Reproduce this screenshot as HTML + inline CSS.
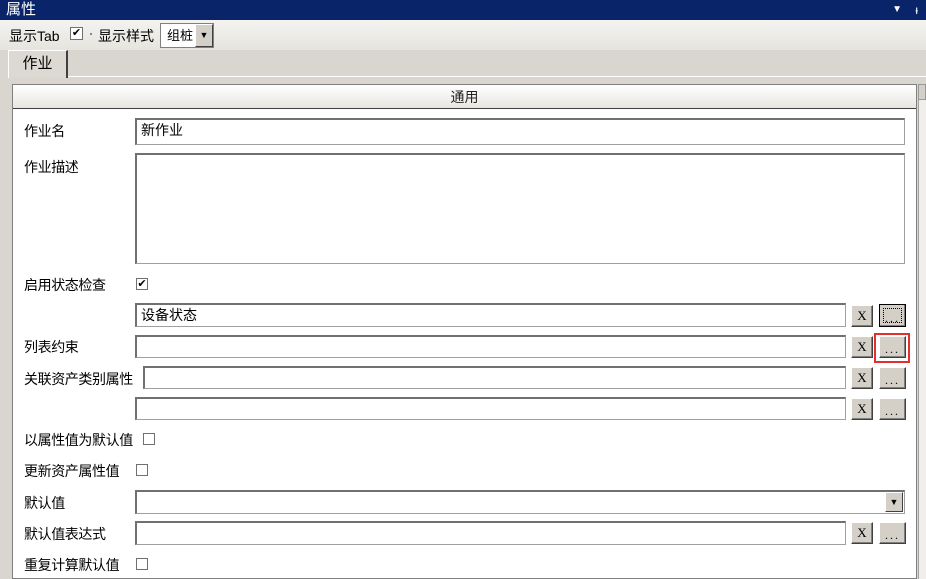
<!DOCTYPE html>
<html><head><meta charset="utf-8"><style>
body{margin:0;width:926px;height:579px;overflow:hidden;background:#d9d6cf;font-family:"Liberation Sans","Noto Sans CJK SC","WenQuanYi Zen Hei",sans-serif;font-size:14px;color:#000;position:relative}
div,span{position:absolute;box-sizing:border-box}
.lbl{left:24px;white-space:nowrap;letter-spacing:-0.4px}
.in{background:#fff;border:1px solid #a0a0a0;border-top:2px solid #707070;border-left:2px solid #707070;padding-left:4px;line-height:20px}
.btn{background:#d4d0c8;border:1px solid;border-color:#fff #404040 #404040 #fff;box-shadow:inset -1px -1px #808080;text-align:center;font-family:"Liberation Serif",serif;font-size:13px;line-height:20px;width:22px;height:22px}
.d{letter-spacing:2px;line-height:24px;font-size:12px}
.cb{width:12px;height:12px;border:1px solid #707070;background:#fff;font-size:11px;line-height:10px;text-align:center}
</style></head><body>
<div style="left:0;top:0;width:926px;height:20px;background:#0a246a;color:#fff;padding-left:6px;line-height:20px;font-size:15px">属性<span style="right:24px;top:0;font-size:10px">▼</span><span style="right:8px;top:0;font-size:12px">ᵼ</span></div>
<div style="left:0;top:20px;width:926px;height:30px;background:linear-gradient(#f4f3f0,#e6e4de)"></div>
<div style="left:9px;top:26px;white-space:nowrap">显示Tab</div>
<div class="cb" style="left:70px;top:27px;width:13px;height:13px">✔</div>
<div style="left:90px;top:33px;width:2px;height:2px;background:#888"></div>
<div style="left:98px;top:26px">显示样式</div>
<div style="left:160px;top:23px;width:54px;height:25px;background:#fff;border:1px solid #808080;padding-left:6px;line-height:23px;font-size:13px;overflow:hidden">组桩</div>
<div style="left:195px;top:24px;width:18px;height:23px;background:#d4d0c8;border:1px solid;border-color:#fff #404040 #404040 #fff;font-size:9px;text-align:center;line-height:21px">▼</div>
<div style="left:0;top:50px;width:926px;height:529px;background:#d9d6cf"></div>
<div style="left:8px;top:50px;width:60px;height:28px;background:#dcd9d2;border-left:1px solid #fff;border-top:1px solid #fff;border-right:2px solid #404040;text-align:center;line-height:25px;font-size:15px">作业</div>
<div style="left:68px;top:76px;width:858px;height:1px;background:#fff"></div>
<div style="left:12px;top:84px;width:905px;height:495px;background:#fff;border:1px solid #808080"></div>
<div style="left:13px;top:85px;width:903px;height:24px;background:linear-gradient(#fff,#e8e6e0);border-bottom:1px solid #404040;text-align:center;line-height:24px;color:#222">通用</div>
<div style="left:918px;top:84px;width:8px;height:495px;background:#f0efec;border-left:1px solid #a0a0a0"></div>
<div style="left:918px;top:84px;width:8px;height:16px;background:#d4d0c8;border:1px solid #999"></div>

<div class="lbl" style="top:121px">作业名</div>
<div class="in" style="left:135px;top:118px;width:770px;height:27px">新作业</div>
<div class="lbl" style="top:157px">作业描述</div>
<div class="in" style="left:135px;top:153px;width:770px;height:111px"></div>
<div class="lbl" style="top:275px">启用状态检查</div>
<div class="cb" style="left:136px;top:278px">✔</div>
<div class="in" style="left:135px;top:303px;width:711px;height:24px">设备状态</div>
<div class="btn" style="left:851px;top:305px">X</div>
<div class="btn d" style="left:879px;top:304px;width:27px;height:23px;border:1px solid #000;line-height:18px"><span style="left:3px;top:3px;width:19px;height:15px;border:1px dotted #000">...</span></div>

<div class="lbl" style="top:337px">列表约束</div>
<div class="in" style="left:135px;top:335px;width:711px;height:23px"></div>
<div class="btn" style="left:851px;top:336px">X</div>
<div class="btn d" style="left:879px;top:336px;width:27px">...</div>
<div style="left:874px;top:333px;width:36px;height:30px;border:2px solid #e03030"></div>

<div class="lbl" style="top:369px">关联资产类别属性</div>
<div class="in" style="left:143px;top:366px;width:703px;height:23px"></div>
<div class="btn" style="left:851px;top:367px">X</div>
<div class="btn d" style="left:879px;top:367px;width:27px">...</div>

<div class="in" style="left:135px;top:397px;width:711px;height:23px"></div>
<div class="btn" style="left:851px;top:398px">X</div>
<div class="btn d" style="left:879px;top:398px;width:27px">...</div>

<div class="lbl" style="top:430px">以属性值为默认值</div>
<div class="cb" style="left:143px;top:433px"></div>
<div class="lbl" style="top:461px">更新资产属性值</div>
<div class="cb" style="left:136px;top:464px"></div>
<div class="lbl" style="top:493px">默认值</div>
<div class="in" style="left:135px;top:490px;width:770px;height:24px"></div>
<div style="left:885px;top:492px;width:18px;height:20px;background:#d4d0c8;border:1px solid;border-color:#fff #404040 #404040 #fff;font-size:9px;text-align:center;line-height:18px">▼</div>
<div class="lbl" style="top:524px">默认值表达式</div>
<div class="in" style="left:135px;top:521px;width:711px;height:24px"></div>
<div class="btn" style="left:851px;top:522px">X</div>
<div class="btn d" style="left:879px;top:522px;width:27px">...</div>
<div class="lbl" style="top:555px">重复计算默认值</div>
<div class="cb" style="left:136px;top:558px"></div>
</body></html>
